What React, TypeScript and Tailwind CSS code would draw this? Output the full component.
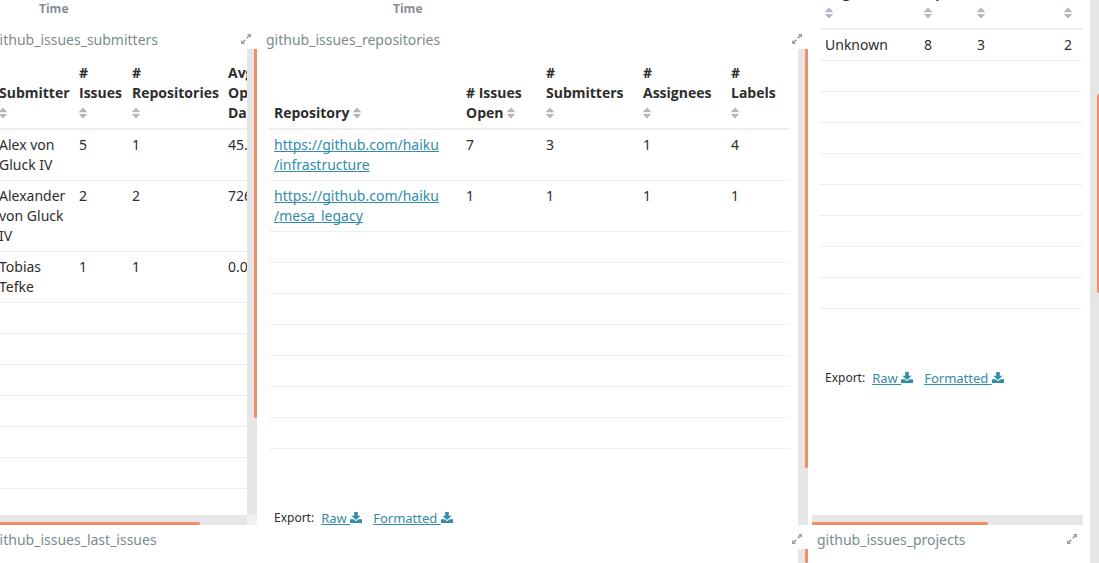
import type { ReactNode } from "react";

const ExpandIcon = () => (
  <svg viewBox="0 0 12 12" className="size-3" fill="currentColor" aria-hidden="true">
    <path d="M7 1h4v4L9.6 3.6 7.4 5.8 6.2 4.6l2.2-2.2zM5 11H1V7l1.4 1.4 2.2-2.2 1.2 1.2-2.2 2.2z" />
  </svg>
);

const SortIcon = () => (
  <svg viewBox="0 0 8 12" className="inline-block h-3 w-2 align-[-1px] text-[#b2b8c0]" fill="currentColor" aria-hidden="true">
    <path d="M4 .5L8.3 5.2H-.3zM4 11.500l4.300-4.500H-.3z" />
  </svg>
);

const DownloadIcon = () => (
  <svg viewBox="0 0 12 12" className="inline-block size-3 align-[-1px]" fill="currentColor" aria-hidden="true">
    <path d="M4.200 0h3.600v3.800H10.600L6 8.100 1.400 3.800h2.800zM0 7.300h3.700L6 9.300l2.300-2H12V11H0z" />
  </svg>
);

function Title({ children }: { children: string }) {
  return (
    <div className="flex h-6 shrink-0 items-center justify-between px-[5px]">
      <h2 className="pt-1.5 text-sm leading-5 text-[#7b8b8e]">{children}</h2>
      <button type="button" aria-label={`Expand ${children}`} className="pt-1 text-[#98a0a8]">
        <ExpandIcon />
      </button>
    </div>
  );
}

function VBar({ thumb }: { thumb: string }) {
  return (
    <div className="flex w-2.5 shrink-0 justify-end bg-[#e6e6e6]">
      <div className={`w-[3px] rounded-b-xs bg-[#ef8e69] ${thumb}`} />
    </div>
  );
}

function HBar({ thumb }: { thumb: string }) {
  return (
    <div className="flex h-2.5 min-w-0 flex-1 items-end bg-[#e6e6e6]">
      <div className={`h-[3px] rounded-r-xs bg-[#ef8e69] ${thumb}`} />
    </div>
  );
}

type Column = { label: string; width: string };

function DataTable({ columns, rows, blanks, className }: { columns: Column[]; rows: ReactNode[][]; blanks: number; className: string }) {
  return (
    <table className={`table-fixed border-separate border-spacing-0 text-left text-sm leading-5 text-[#2d2d2d] ${className}`}>
      <thead>
        <tr>
          {columns.map((c) => (
            <th key={c.label} scope="col" className={`border-b-2 border-[#ecf0f1] p-[5px] align-bottom font-['Open_Sans',sans-serif] font-bold ${c.width}`}>
              {c.label} <SortIcon />
            </th>
          ))}
        </tr>
      </thead>
      <tbody>
        {rows.map((row, i) => (
          <tr key={i}>
            {row.map((cell, j) => (
              <td key={j} className="border-b border-[#ecf0f1] p-[5px] align-top">{cell}</td>
            ))}
          </tr>
        ))}
        {Array.from({ length: blanks }, (_, i) => (
          <tr key={`blank-${i}`}>
            <td colSpan={columns.length} className="border-b border-[#ecf0f1] p-[5px]">&nbsp;</td>
          </tr>
        ))}
      </tbody>
    </table>
  );
}

const linkStyle = "text-[#328caa] underline underline-offset-1 [text-decoration-skip-ink:none]";

function ExportLinks() {
  return (
    <div className="mt-[59px] flex items-center pl-[5px] text-xs leading-5 text-[#2d2d2d]">
      <span>Export:</span>
      <a href="#raw" className={`ml-[7px] text-[13px] ${linkStyle}`}>Raw <DownloadIcon /></a>
      <a href="#formatted" className={`ml-[11px] text-[13px] ${linkStyle}`}>Formatted <DownloadIcon /></a>
    </div>
  );
}

const repoLink = (name: string) => (
  <a href={`https://github.com/haiku/${name}`} className={linkStyle}>
    https://github.com/haiku<wbr />/{name}
  </a>
);

const submitterColumns = [
  { label: "Submitter", width: "w-[80px]" },
  { label: "# Issues", width: "w-[53px]" },
  { label: "# Repositories", width: "w-[96px]" },
  { label: "Avg. Open Days", width: "w-[73px]" },
];

const repositoryColumns = [
  { label: "Repository", width: "" },
  { label: "# Issues Open", width: "w-[80px]" },
  { label: "# Submitters", width: "w-[97px]" },
  { label: "# Assignees", width: "w-[88px]" },
  { label: "# Labels", width: "w-[64px]" },
];

const organizationColumns = [
  { label: "Organization", width: "w-[99px]" },
  { label: "# Issues Open", width: "w-[53px]" },
  { label: "# Submitters", width: "w-[87px]" },
  { label: "# Assignees", width: "w-[88px]" },
];

export default function App() {
  return (
    <div className="flex h-screen overflow-hidden bg-white font-['Noto_Sans',sans-serif]">
      <main className="grid min-w-0 flex-1 grid-cols-[minmax(0,822fr)_minmax(0,271fr)] gap-1 pr-[7px] -ml-3.5">
        <div className="flex min-w-0 flex-col">
          <div className="grid h-[525px] shrink-0 grid-cols-[minmax(0,271fr)_minmax(0,547fr)] gap-1">
            <section className="flex min-h-0 min-w-0 flex-col">
              <p className="h-[25px] pl-[53px] font-['Open_Sans',sans-serif] text-xs font-bold leading-[18px] text-[#848e96]">Time</p>
              <Title>github_issues_submitters</Title>
              <div className="flex min-h-0 flex-1">
                <div className="min-w-0 flex-1 overflow-hidden px-2 pt-[9px]">
                  <div className="-mr-2">
                    <DataTable
                      className="w-[302px]"
                      columns={submitterColumns}
                      rows={[
                        ["Alex von Gluck IV", "5", "1", "45.5"],
                        ["Alexander von Gluck IV", "2", "2", "726.5"],
                        ["Tobias Tefke", "1", "1", "0.0"],
                      ]}
                      blanks={7}
                    />
                  </div>
                </div>
                <VBar thumb="h-[369px]" />
              </div>
              <div className="flex">
                <HBar thumb="w-[82%]" />
                <div className="size-2.5 bg-[#f2f1ef]" />
              </div>
            </section>
            <section className="flex min-h-0 min-w-0 flex-col">
              <p className="h-[25px] pl-[132px] font-['Open_Sans',sans-serif] text-xs font-bold leading-[18px] text-[#848e96]">Time</p>
              <Title>github_issues_repositories</Title>
              <div className="flex min-h-0 flex-1">
                <div className="min-w-0 flex-1 overflow-hidden px-2 pt-[9px]">
                  <DataTable
                    className="w-full"
                    columns={repositoryColumns}
                    rows={[
                      [repoLink("infrastructure"), "7", "3", "1", "4"],
                      [repoLink("mesa_legacy"), "1", "1", "1", "1"],
                    ]}
                    blanks={7}
                  />
                  <ExportLinks />
                </div>
                <VBar thumb="h-[419px]" />
              </div>
            </section>
          </div>
          <section className="flex min-h-0 flex-1 flex-col">
            <Title>github_issues_last_issues</Title>
            <div className="flex min-h-0 flex-1 justify-end">
              <VBar thumb="h-full" />
            </div>
          </section>
        </div>
        <div className="flex min-w-0 flex-col">
          <section className="flex h-[525px] shrink-0 flex-col">
            <div className="flex min-h-0 flex-1 flex-col overflow-hidden pl-2">
              <div className="-mt-[62px]">
                <DataTable
                  className="w-[327px]"
                  columns={organizationColumns}
                  rows={[["Unknown", "8", "3", "2"]]}
                  blanks={8}
                />
                <ExportLinks />
              </div>
            </div>
            <div className="flex">
              <HBar thumb="w-[65%]" />
            </div>
          </section>
          <Title>github_issues_projects</Title>
        </div>
      </main>
      <div className="flex w-[9px] shrink-0 justify-end bg-[#e6e6e6] pt-[94px]">
        <div className="h-[199px] w-0.5 rounded-l-xs bg-[#ef8e69]" />
      </div>
    </div>
  );
}
